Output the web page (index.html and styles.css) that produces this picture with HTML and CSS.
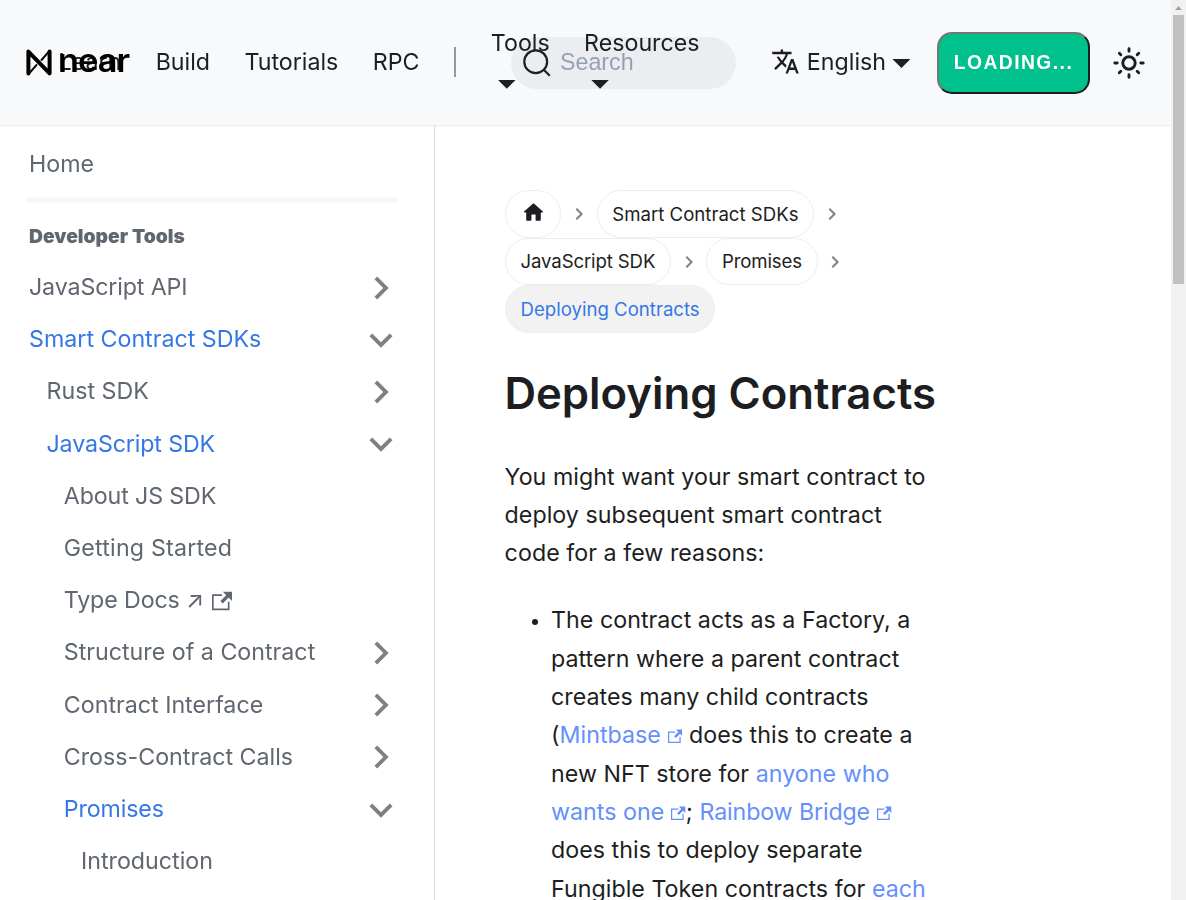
FILE: index.html
```
<!DOCTYPE html>
<html lang="en">
<head>
<meta charset="utf-8">
<title>Deploying Contracts | NEAR Documentation</title>
<link rel="stylesheet" href="styles.css">
</head>
<body>
<svg class="defs" aria-hidden="true">
  <symbol id="chev" viewBox="0 0 24 24"><path d="M8.59 16.59 13.17 12 8.59 7.41 10 6l6 6-6 6-1.41-1.41z"/></symbol>
  <symbol id="ext" viewBox="0 0 24 24"><path d="M21 13v10h-21v-19h12v2h-10v15h17v-8h2zm3-12h-10.988l4.035 4-6.977 7.07 2.828 2.828 6.977-7.07 4.125 4.172v-11z"/></symbol>
</svg>
<div class="app">
  <header class="navbar">
    <a class="brand" href="#">
      <svg class="brand-mark" viewBox="0 0 26 27"><path d="M2.4 24.4V2.6L23.6 24.4V2.6" fill="none" stroke="#000" stroke-width="4" stroke-linejoin="round" stroke-linecap="round"/><path d="M15 11.6 23.2 2.2M2.8 24.800 11 15.400" fill="none" stroke="#000" stroke-width="2"/></svg>
      <span class="brand-name">near</span>
    </a>
    <nav class="links">
      <a class="item" href="#">Learn</a>
      <a class="item" href="#">Build</a>
      <a class="item" href="#">Tutorials</a>
      <a class="item" href="#">RPC</a>
      <span class="divider"></span>
      <a class="item drop tools" href="#"><span>Tools</span><i class="caret"></i></a>
      <a class="item drop" href="#"><span>Resources</span><i class="caret"></i></a>
    </nav>
    <div class="actions">
      <a class="lang" href="#">
        <svg class="lang-icon" viewBox="0 0 24 24"><path fill="currentColor" d="M12.87 15.07l-2.54-2.51.03-.03c1.74-1.94 2.98-4.17 3.71-6.53H17V4h-7V2H8v2H1v1.99h11.17C11.5 7.92 10.44 9.75 9 11.35 8.07 10.32 7.3 9.19 6.69 8h-2c.73 1.63 1.73 3.17 2.98 4.56l-5.09 5.02L4 19l5-5 3.11 3.11.76-2.04zM18.5 10h-2L12 22h2l1.12-3h4.75L21 22h2l-4.5-12zm-2.62 7l1.62-4.33L19.12 17h-3.24z"/></svg>
        <span>English</span><i class="caret"></i>
      </a>
      <button class="login">LOADING...</button>
      <svg class="sun" viewBox="0 0 32 32"><g fill="none" stroke="#1c1e21" stroke-width="2.9" stroke-linecap="round"><circle cx="16" cy="16" r="6.2"/><path d="M16 1.8v2.4M16 27.8v2.4M1.8 16h2.4M27.8 16h2.4M6.3 6.3l1.5 1.5M24.2 24.2l1.5 1.5M25.7 6.3l-1.5 1.5M7.8 24.2l-1.5 1.5"/></g></svg>
    </div>
    <div class="search">
      <svg class="search-icon" viewBox="0 0 28 28"><g fill="none" stroke="#1c1e21" stroke-width="2.2"><circle cx="12.7" cy="12.7" r="11.4"/><path d="M20.5 20.5 26.8 26.8"/></g></svg>
      <span>Search</span>
    </div>
  </header>
  <div class="body">
    <aside class="sidebar">
      <a class="row" href="#">Home</a>
      <hr class="rule">
      <h2 class="group">Developer Tools</h2>
      <a class="row tight" href="#">JavaScript API<svg class="chev"><use href="#chev"/></svg></a>
      <a class="row active" href="#">Smart Contract SDKs<svg class="chev open"><use href="#chev"/></svg></a>
      <a class="row l2" href="#">Rust SDK<svg class="chev"><use href="#chev"/></svg></a>
      <a class="row l2 tight active" href="#">JavaScript SDK<svg class="chev open"><use href="#chev"/></svg></a>
      <a class="row l3 tight" href="#">About JS SDK</a>
      <a class="row l3 loose" href="#">Getting Started</a>
      <a class="row l3 tight" href="#">Type Docs ↗<svg class="ext-lg"><use href="#ext"/></svg></a>
      <a class="row l3" href="#">Structure of a Contract<svg class="chev"><use href="#chev"/></svg></a>
      <a class="row l3" href="#">Contract Interface<svg class="chev"><use href="#chev"/></svg></a>
      <a class="row l3" href="#">Cross-Contract Calls<svg class="chev"><use href="#chev"/></svg></a>
      <a class="row l3 tight active" href="#">Promises<svg class="chev open"><use href="#chev"/></svg></a>
      <a class="row l4" href="#">Introduction</a>
    </aside>
    <main class="content">
      <nav class="crumbs">
        <span class="step"><a class="crumb" href="#"><svg class="home" viewBox="0 0 24 24"><path fill="currentColor" d="M10 19v-5h4v5c0 .55.45 1 1 1h3c.55 0 1-.45 1-1v-7h1.700c.46 0 .68-.57.33-.87L12.670 3.600c-.38-.34-.96-.34-1.340 0l-8.360 7.530c-.34.3-.13.87.33.87H5v7c0 .55.45 1 1 1h3c.55 0 1-.45 1-1z"/></svg></a><svg class="sep"><use href="#chev"/></svg></span>
        <span class="step"><a class="crumb" href="#">Smart Contract SDKs</a><svg class="sep"><use href="#chev"/></svg></span>
        <span class="step"><a class="crumb tight" href="#">JavaScript SDK</a><svg class="sep"><use href="#chev"/></svg></span>
        <span class="step"><a class="crumb tight" href="#">Promises</a><svg class="sep"><use href="#chev"/></svg></span>
        <span class="crumb current">Deploying Contracts</span>
      </nav>
      <h1 class="title">Deploying Contracts</h1>
      <p class="para">You might want your smart contract to<br>deploy subsequent smart contract<br>code for a few reasons:</p>
      <ul class="list">
        <li>The contract acts as a Factory, a<br>pattern where a parent contract<br>creates many child contracts<br>(<a href="#">Mintbase<svg class="ext"><use href="#ext"/></svg></a> does this to create a<br>new NFT store for <a href="#">anyone who<br>wants one<svg class="ext"><use href="#ext"/></svg></a>; <a class="tight" href="#">Rainbow Bridge<svg class="ext"><use href="#ext"/></svg></a><br>does this to deploy separate<br>Fungible Token contracts for <a href="#">each</a></li>
      </ul>
    </main>
  </div>
</div>
<div class="scrollbar"><i class="arrow"></i><i class="thumb"></i></div>
</body>
</html>
```
FILE: styles.css
```
* { box-sizing: border-box; }
body {
  margin: 0;
  height: 900px;
  overflow: hidden;
  display: grid;
  grid-template-columns: 1171px 15px;
  background: #fff;
  color: #1c1e21;
  font: 400 23.23px/38.33px Inter, sans-serif;
}
a { color: inherit; text-decoration: none; }
.defs { position: absolute; width: 0; height: 0; }
.app { height: 900px; overflow: hidden; }

.navbar {
  position: relative;
  will-change: transform;
  height: 125px;
  display: flex;
  justify-content: space-between;
  padding: 0 26px 0 41px;
  background: #f8f9fb;
  box-shadow: 0 1px 2px rgba(0, 0, 0, .1);
}
.brand {
  position: absolute;
  left: 26px;
  top: 49px;
  display: flex;
  align-items: center;
  color: #000;
}
.brand-mark { width: 26px; height: 27px; }
.brand-name {
  margin: -6px 0 0 5.5px;
  font-size: 33px;
  font-weight: 600;
  line-height: 26px;
  letter-spacing: -0.9px;
  transform: scaleX(1.04);
  transform-origin: left;
}
.links { display: flex; align-items: center; height: 124px; }
.item { padding: 0 17.2px; white-space: nowrap; }
.item:first-child { margin-left: 0.3px; }
.divider { width: 2px; height: 30px; margin: 0 17.2px; background: #97989b; }
.drop { display: flex; flex-direction: column; }
.tools { margin-left: 0.6px; }
.drop .caret { margin: 17px 0 11px 7px; }
.caret {
  display: block;
  width: 18px;
  height: 9px;
  background: #1c1e21;
  clip-path: polygon(0 0, 100% 0, 50% 100%);
}
.actions { display: flex; align-items: center; height: 124px; }
.lang { display: flex; align-items: center; }
.lang-icon { width: 29px; height: 29px; margin-right: 7px; }
.lang .caret { margin: 3px 0 0 6.4px; }
.login {
  width: 153px;
  height: 62px;
  margin: 1px 23px 0 26.6px;
  padding: 0;
  border: 2px solid;
  border-color: #767676 #1c1e21 #1c1e21 #767676;
  border-radius: 15px;
  background: #00c08b;
  color: #fff;
  font: 700 19.3px "Liberation Sans", sans-serif;
  letter-spacing: 1.45px;
}
.sun { width: 32px; height: 32px; margin-top: 1px; }
.search {
  position: absolute;
  left: 511px;
  top: 37px;
  width: 225px;
  height: 52px;
  display: flex;
  align-items: center;
  padding: 0 0 2px 12px;
  border-radius: 26px;
  background: #ebedf0;
  z-index: -1;
  color: #97a0b5;
  font-family: "Liberation Sans", sans-serif;
}
.search-icon { width: 28px; height: 28px; margin: 1px 9px 0 0; }

.body { display: flex; }
.sidebar {
  width: 435px;
  height: 775px;
  padding: 13px 36px 0 26px;
  border-right: 1px solid #dadde1;
  will-change: transform;
  color: #606770;
}
.row {
  display: flex;
  align-items: center;
  height: 52.19px;
  padding-left: 3px;
}
.l2 { padding-left: 20.5px; }
.l3 { padding-left: 37.8px; }
.l4 { padding-left: 55px; }
.tight { letter-spacing: -0.13px; }
.loose { letter-spacing: 0.2px; }
.active { color: #3578e5; }
.chev { width: 46px; height: 46px; margin: 1px -6.4px 0 auto; fill: #808080; }
.open { transform: rotate(90deg); }
.rule { height: 6px; margin: 7px 0 8px; border: 0; background: #f8f8f8; }
.group { height: 50px; margin: 0; padding: 0 0 0 3px; font-size: 19.3px; font-weight: 900; line-height: 50px; }
.ext-lg { width: 20px; height: 20px; margin: 1px 0 0 8.5px; fill: #606770; }

.content { padding: 65px 0 0 70px; }
.crumbs {
  display: flex;
  flex-wrap: wrap;
  align-items: center;
  width: 362px;
  font-size: 18.6px;
}
.step { display: flex; align-items: center; }
.crumb {
  display: flex;
  align-items: center;
  height: 47.5px;
  padding: 0 14.6px;
  border: 1px solid #eee;
  border-radius: 24px;
}
.home { width: 25px; height: 25px; margin: 0 0 3px; }
.sep { width: 24px; height: 24px; margin: 1px 5.9px 0 5.7px; fill: #808080; }
.current { background: #f2f2f2; color: #3578e5; }
.title { margin: 32px 0 35px -0.6px; font-size: 43.7px; font-weight: 600; line-height: 58px; }
.para { margin: 0.4px 0 29px -0.4px; letter-spacing: 0.04px; }
.list { margin: 0; padding-left: 46px; letter-spacing: 0.03px; }
.list a { color: #658ffc; }
.list li::marker { font-size: 20px; }
.ext { width: 14.5px; height: 14.5px; margin-left: 7px; fill: #658ffc; }

.scrollbar { background: #f1f1f1; padding: 6px 2px 0; }
.arrow { display: block; width: 7px; height: 4px; margin: 0 auto; background: #a3a3a3; clip-path: polygon(50% 0, 100% 100%, 0 100%); }
.thumb { display: block; height: 269px; margin-top: 5px; background: #c1c1c1; }
```
